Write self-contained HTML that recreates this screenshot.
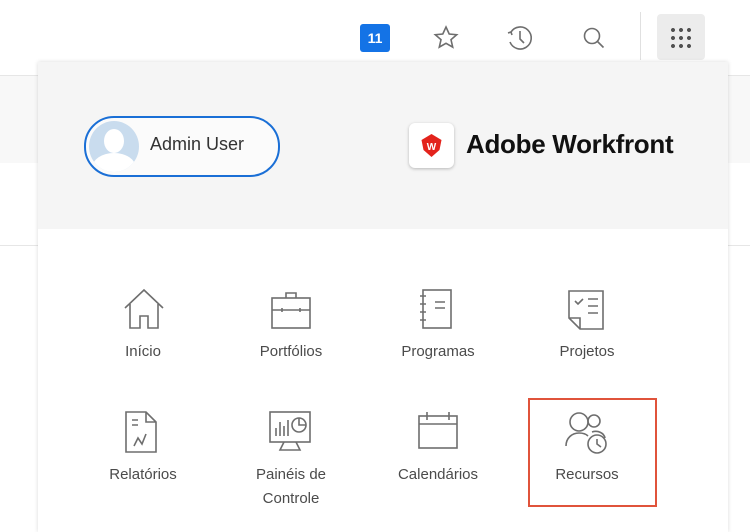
<!DOCTYPE html>
<html><head><style>
body{margin:0;width:750px;height:522px;background:#fff;font-family:"Liberation Sans",sans-serif;position:relative;overflow:hidden}
.a{position:absolute}
.lbl{position:absolute;width:140px;text-align:center;font-size:15px;color:#4b4b4b;line-height:24px}
svg{position:absolute;fill:none;stroke:#6e6e6e;stroke-width:1.6}
</style></head><body>
<div class="a" style="left:0;top:75px;width:750px;height:87px;background:#f8f8f8;border-top:1px solid #e6e6e6"></div>
<div class="a" style="left:0;top:245px;width:750px;height:1px;background:#e6e6e6"></div>
<div class="a" style="left:360px;top:24px;width:30px;height:28px;background:#1473e6;border-radius:3px;color:#fff;font-weight:bold;font-size:14px;text-align:center;line-height:28px">11</div>
<svg style="left:432px;top:24px" width="28" height="28" viewBox="0 0 28 28"><path d="M14 3l3.2 7 7.5.7-5.7 5 1.7 7.4L14 19.3 7.3 23.1 9 15.7 3.3 10.7l7.5-.7z"/></svg>
<svg style="left:505px;top:23px" width="30" height="30" viewBox="0 0 30 30"><path d="M6 9A11 11 0 1 1 5 19"/><path d="M3 10l3 -1 1 3"/><path d="M15 8v8l4 4"/></svg>
<svg style="left:580px;top:24px" width="28" height="28" viewBox="0 0 28 28" style="stroke-width:2"><circle cx="12" cy="12" r="7.5"/><path d="M17.5 17.5l6 6"/></svg>
<div class="a" style="left:640px;top:12px;width:1px;height:48px;background:#e0e0e0"></div>
<div class="a" style="left:657px;top:14px;width:48px;height:46px;background:#ececec;border-radius:4px"></div>
<div class="a" style="left:669px;top:26px;width:22px;height:22px;background:radial-gradient(circle,#505050 1.8px,transparent 2.2px) 0 0/8px 8px"></div>
<div class="a" style="left:38px;top:62px;width:690px;height:470px;background:#fff;box-shadow:0 0 4px rgba(0,0,0,.15)"></div>
<div class="a" style="left:38px;top:62px;width:690px;height:167px;background:#f5f5f5"></div>
<div class="a" style="left:84px;top:116px;width:192px;height:57px;border:2px solid #1a6fd6;border-radius:30px;background:#fbfbfb"></div>
<div class="a" style="left:89px;top:121px;width:50px;height:51px;border-radius:50%;background:#c9dcee;overflow:hidden"><div class="a" style="left:15px;top:8px;width:20px;height:24px;border-radius:50%;background:#fff"></div><div class="a" style="left:3px;top:32px;width:44px;height:30px;border-radius:50%;background:#fff"></div></div>
<div class="a" style="left:150px;top:134px;font-size:18px;color:#333">Admin User</div>
<div class="a" style="left:409px;top:123px;width:45px;height:45px;background:#fff;border-radius:6px;box-shadow:0 1px 3px rgba(0,0,0,.25)"></div>
<svg style="left:419px;top:133px;stroke:none;fill:#e3231c" width="25" height="25" viewBox="0 0 25 25"><path d="M12.5 1l10 6-2 10-8 7-8-7-2-10z"/><text x="12.5" y="17" font-size="10" font-weight="bold" fill="#fff" text-anchor="middle" font-family="Liberation Sans">W</text></svg>
<div class="a" style="left:466px;top:129px;font-size:26px;font-weight:bold;color:#111;letter-spacing:-0.3px">Adobe Workfront</div>
<svg style="left:122px;top:288px" width="44" height="44" viewBox="0 0 44 44"><path d="M3 20L22 2l19 18M8 16v24h10V28h8v12h10V16"/></svg>
<svg style="left:270px;top:290px" width="44" height="40" viewBox="0 0 44 40"><rect x="2" y="8" width="38" height="30"/><path d="M16 8V3h10v5M2 20h38M12 18v4M30 18v4"/></svg>
<svg style="left:417px;top:288px" width="44" height="44" viewBox="0 0 44 44"><rect x="6" y="2" width="28" height="38"/><path d="M3 8h6M3 16h6M3 24h6M3 32h6M18 14h10M18 20h10"/></svg>
<svg style="left:566px;top:289px" width="44" height="44" viewBox="0 0 44 44"><path d="M3 2h34v38H14l-11-11z M3 29h11v11"/><path d="M9 12l3 3 5-5M22 10h10M22 17h10M22 24h10"/></svg>
<svg style="left:122px;top:410px" width="44" height="44" viewBox="0 0 44 44"><path d="M4 2h20l10 10v30H4z M24 2v10h10M10 10h6M10 15h6M12 36l4-8 4 6 4-10"/></svg>
<svg style="left:268px;top:410px" width="48" height="44" viewBox="0 0 48 44"><rect x="2" y="2" width="40" height="30"/><path d="M16 32l-4 8h20l-4-8M8 26V18M12 26V12M16 26V16M20 26V10"/><circle cx="31" cy="15" r="7"/><path d="M31 8v7h7"/></svg>
<svg style="left:417px;top:412px" width="44" height="40" viewBox="0 0 44 40"><rect x="2" y="4" width="38" height="32"/><path d="M2 12h38M10 0v8M32 0v8"/></svg>
<svg style="left:564px;top:410px" width="50" height="46" viewBox="0 0 50 46"><circle cx="15" cy="12" r="9"/><path d="M2 36c0-8 6-13 13-13 4 0 7 1 9 3"/><circle cx="30" cy="11" r="6"/><path d="M28 22c6-2 12 1 13 6"/><circle cx="33" cy="34" r="9"/><path d="M33 29v5l4 3"/></svg>
<div class="lbl" style="left:73px;top:340px">Início</div>
<div class="lbl" style="left:221px;top:340px">Portfólios</div>
<div class="lbl" style="left:368px;top:340px">Programas</div>
<div class="lbl" style="left:517px;top:340px">Projetos</div>
<div class="lbl" style="left:73px;top:463px">Relatórios</div>
<div class="lbl" style="left:221px;top:463px">Painéis de<br>Controle</div>
<div class="lbl" style="left:368px;top:463px">Calendários</div>
<div class="lbl" style="left:517px;top:463px">Recursos</div>
<div class="a" style="left:528px;top:398px;width:125px;height:105px;border:2px solid #e0533b"></div>
</body></html>
